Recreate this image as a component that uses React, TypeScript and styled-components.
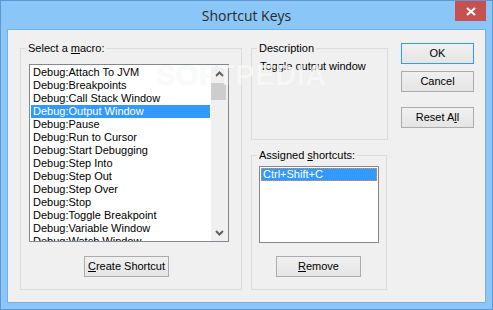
import React from "react";
import styled, { createGlobalStyle } from "styled-components";

const GlobalStyle = createGlobalStyle`
  html, body { margin: 0; padding: 0; background: #ffffff; }
  body { font-family: "Liberation Sans", Arial, sans-serif; font-size: 11px; color: #000; }
  * { box-sizing: border-box; }
`;

const Window = styled.div`
  position: relative;
  width: 493px;
  height: 310px;
  background: #8ac7f8;
  border: 1px solid #5f97d0;
  display: flex;
  flex-direction: column;
`;

const TitleBar = styled.div`
  height: 28px;
  display: grid;
  grid-template-columns: 1fr auto 1fr;
  align-items: center;
`;

const Title = styled.div`
  grid-column: 2;
  font-family: "Open Sans", "Noto Sans", sans-serif;
  font-size: 14px;
  color: #2a2a2a;
  padding-top: 1px;
`;

const CloseButton = styled.div`
  grid-column: 3;
  justify-self: end;
  align-self: start;
  margin-right: 6px;
  width: 31px;
  height: 20px;
  background: #c75050;
  display: flex;
  align-items: center;
  justify-content: center;
`;

const Client = styled.div`
  flex: 1;
  margin: 0 6px 6px 6px;
  border: 1px solid #78aee2;
  background: #f0f0f0;
  padding: 13px 0 0 12px;
  display: flex;
  align-items: flex-start;
`;

const GroupBox = styled.div<{ $w: number; $h: number; $mt?: number }>`
  width: ${(p) => p.$w}px;
  height: ${(p) => p.$h}px;
  margin-top: ${(p) => p.$mt ?? 0}px;
  border: 1px solid #dcdcdc;
  display: flex;
  flex-direction: column;
  align-items: flex-start;
`;

const GroupLabel = styled.div`
  margin: -7px 0 0 5px;
  padding: 0 2px;
  height: 13px;
  line-height: 13px;
  background: #f0f0f0;
  white-space: nowrap;
`;

const ListBox = styled.div<{ $w: number; $h: number; $mt: number; $ml: number }>`
  width: ${(p) => p.$w}px;
  height: ${(p) => p.$h}px;
  margin: ${(p) => p.$mt}px 0 0 ${(p) => p.$ml}px;
  border: 1px solid #828790;
  background: #ffffff;
  display: flex;
  overflow: hidden;
`;

const ListItems = styled.div`
  flex: 1;
  padding: 1px 1px 0 1px;
  overflow: hidden;
`;

const ListItem = styled.div<{ $selected?: boolean; $focused?: boolean }>`
  height: 13px;
  line-height: 13px;
  padding-left: ${(p) => (p.$focused ? 1 : 2)}px;
  white-space: nowrap;
  background: ${(p) => (p.$selected ? "#3399ff" : "transparent")};
  color: ${(p) => (p.$selected ? "#ffffff" : "#000000")};
  border: ${(p) => (p.$focused ? "1px dotted #e8912e" : "none")};
  line-height: ${(p) => (p.$focused ? 11 : 13)}px;
`;

const ScrollBar = styled.div`
  width: 17px;
  background: #f0f0f0;
  display: flex;
  flex-direction: column;
`;

const ScrollArrow = styled.div`
  height: 17px;
  display: flex;
  align-items: center;
  justify-content: center;
`;

const ScrollTrack = styled.div`
  flex: 1;
  padding: 1px 2px 0 0;
`;

const ScrollThumb = styled.div`
  height: 17px;
  background: #cdcdcd;
`;

const PushButton = styled.div<{ $w: number; $default?: boolean; $mt?: number; $ml?: number }>`
  width: ${(p) => p.$w}px;
  height: 21px;
  margin: ${(p) => p.$mt ?? 0}px 0 0 ${(p) => p.$ml ?? 0}px;
  border: 1px solid ${(p) => (p.$default ? "#3399ff" : "#acacac")};
  background: linear-gradient(#f0f0f0, #e5e5e5);
  display: flex;
  align-items: center;
  justify-content: center;
  white-space: nowrap;
  padding-bottom: 1px;
`;

const MiddleColumn = styled.div`
  margin-left: 9px;
  display: flex;
  flex-direction: column;
`;

const ButtonColumn = styled.div`
  margin-left: 13px;
  display: flex;
  flex-direction: column;
`;

const DescText = styled.div`
  margin: 5px 0 0 8px;
  line-height: 13px;
`;

const Watermark = styled.div`
  position: absolute;
  left: 155px;
  top: 58px;
  font-family: "Liberation Sans", Arial, sans-serif;
  font-weight: bold;
  font-size: 29px;
  letter-spacing: 0.5px;
  color: rgba(255, 255, 255, 0.75);
  text-shadow: 0 0 1px rgba(0, 0, 0, 0.08);
  pointer-events: none;
`;

const macros = [
  "Attach To JVM",
  "Breakpoints",
  "Call Stack Window",
  "Output Window",
  "Pause",
  "Run to Cursor",
  "Start Debugging",
  "Step Into",
  "Step Out",
  "Step Over",
  "Stop",
  "Toggle Breakpoint",
  "Variable Window",
  "Watch Window",
];

const Chevron = ({ up }: { up?: boolean }) => (
  <svg width="9" height="6" viewBox="0 0 9 6">
    <polyline
      points={up ? "1,5 4.5,1.5 8,5" : "1,1 4.5,4.5 8,1"}
      fill="none"
      stroke="#606060"
      strokeWidth="2"
    />
  </svg>
);

export default function App() {
  return (
    <>
      <GlobalStyle />
      <Window>
        <TitleBar>
          <Title>Shortcut Keys</Title>
          <CloseButton>
            <svg width="10" height="9" viewBox="0 0 10 9">
              <path d="M1 1 L9 8 M9 1 L1 8" stroke="#ffffff" strokeWidth="2.2" />
            </svg>
          </CloseButton>
        </TitleBar>
        <Client>
          <GroupBox $w={222} $h={242} $mt={5}>
            <GroupLabel>
              Select a <u>m</u>acro:
            </GroupLabel>
            <ListBox $w={200} $h={178} $mt={9} $ml={8}>
              <ListItems>
                {macros.map((m) => (
                  <ListItem key={m} $selected={m === "Output Window"}>
                    Debug:{m}
                  </ListItem>
                ))}
              </ListItems>
              <ScrollBar>
                <ScrollArrow>
                  <Chevron up />
                </ScrollArrow>
                <ScrollTrack>
                  <ScrollThumb />
                </ScrollTrack>
                <ScrollArrow>
                  <Chevron />
                </ScrollArrow>
              </ScrollBar>
            </ListBox>
            <PushButton $w={85} $mt={14} $ml={63}>
              <span>
                <u>C</u>reate Shortcut
              </span>
            </PushButton>
          </GroupBox>
          <MiddleColumn>
            <GroupBox $w={137} $h={92} $mt={5}>
              <GroupLabel>Description</GroupLabel>
              <DescText>Toggle output window</DescText>
            </GroupBox>
            <GroupBox $w={136} $h={135} $mt={15}>
              <GroupLabel>
                Assigned <u>s</u>hortcuts:
              </GroupLabel>
              <ListBox $w={120} $h={77} $mt={4} $ml={7}>
                <ListItems>
                  <ListItem $selected $focused>
                    Ctrl+Shift+C
                  </ListItem>
                </ListItems>
              </ListBox>
              <PushButton $w={85} $mt={13} $ml={24}>
                <span>
                  <u>R</u>emove
                </span>
              </PushButton>
            </GroupBox>
          </MiddleColumn>
          <ButtonColumn>
            <PushButton $w={73} $default>
              OK
            </PushButton>
            <PushButton $w={73} $mt={7}>
              Cancel
            </PushButton>
            <PushButton $w={73} $mt={15}>
              <span>
                Reset A<u>l</u>l
              </span>
            </PushButton>
          </ButtonColumn>
        </Client>
        <Watermark>SOFTPEDIA</Watermark>
      </Window>
    </>
  );
}
